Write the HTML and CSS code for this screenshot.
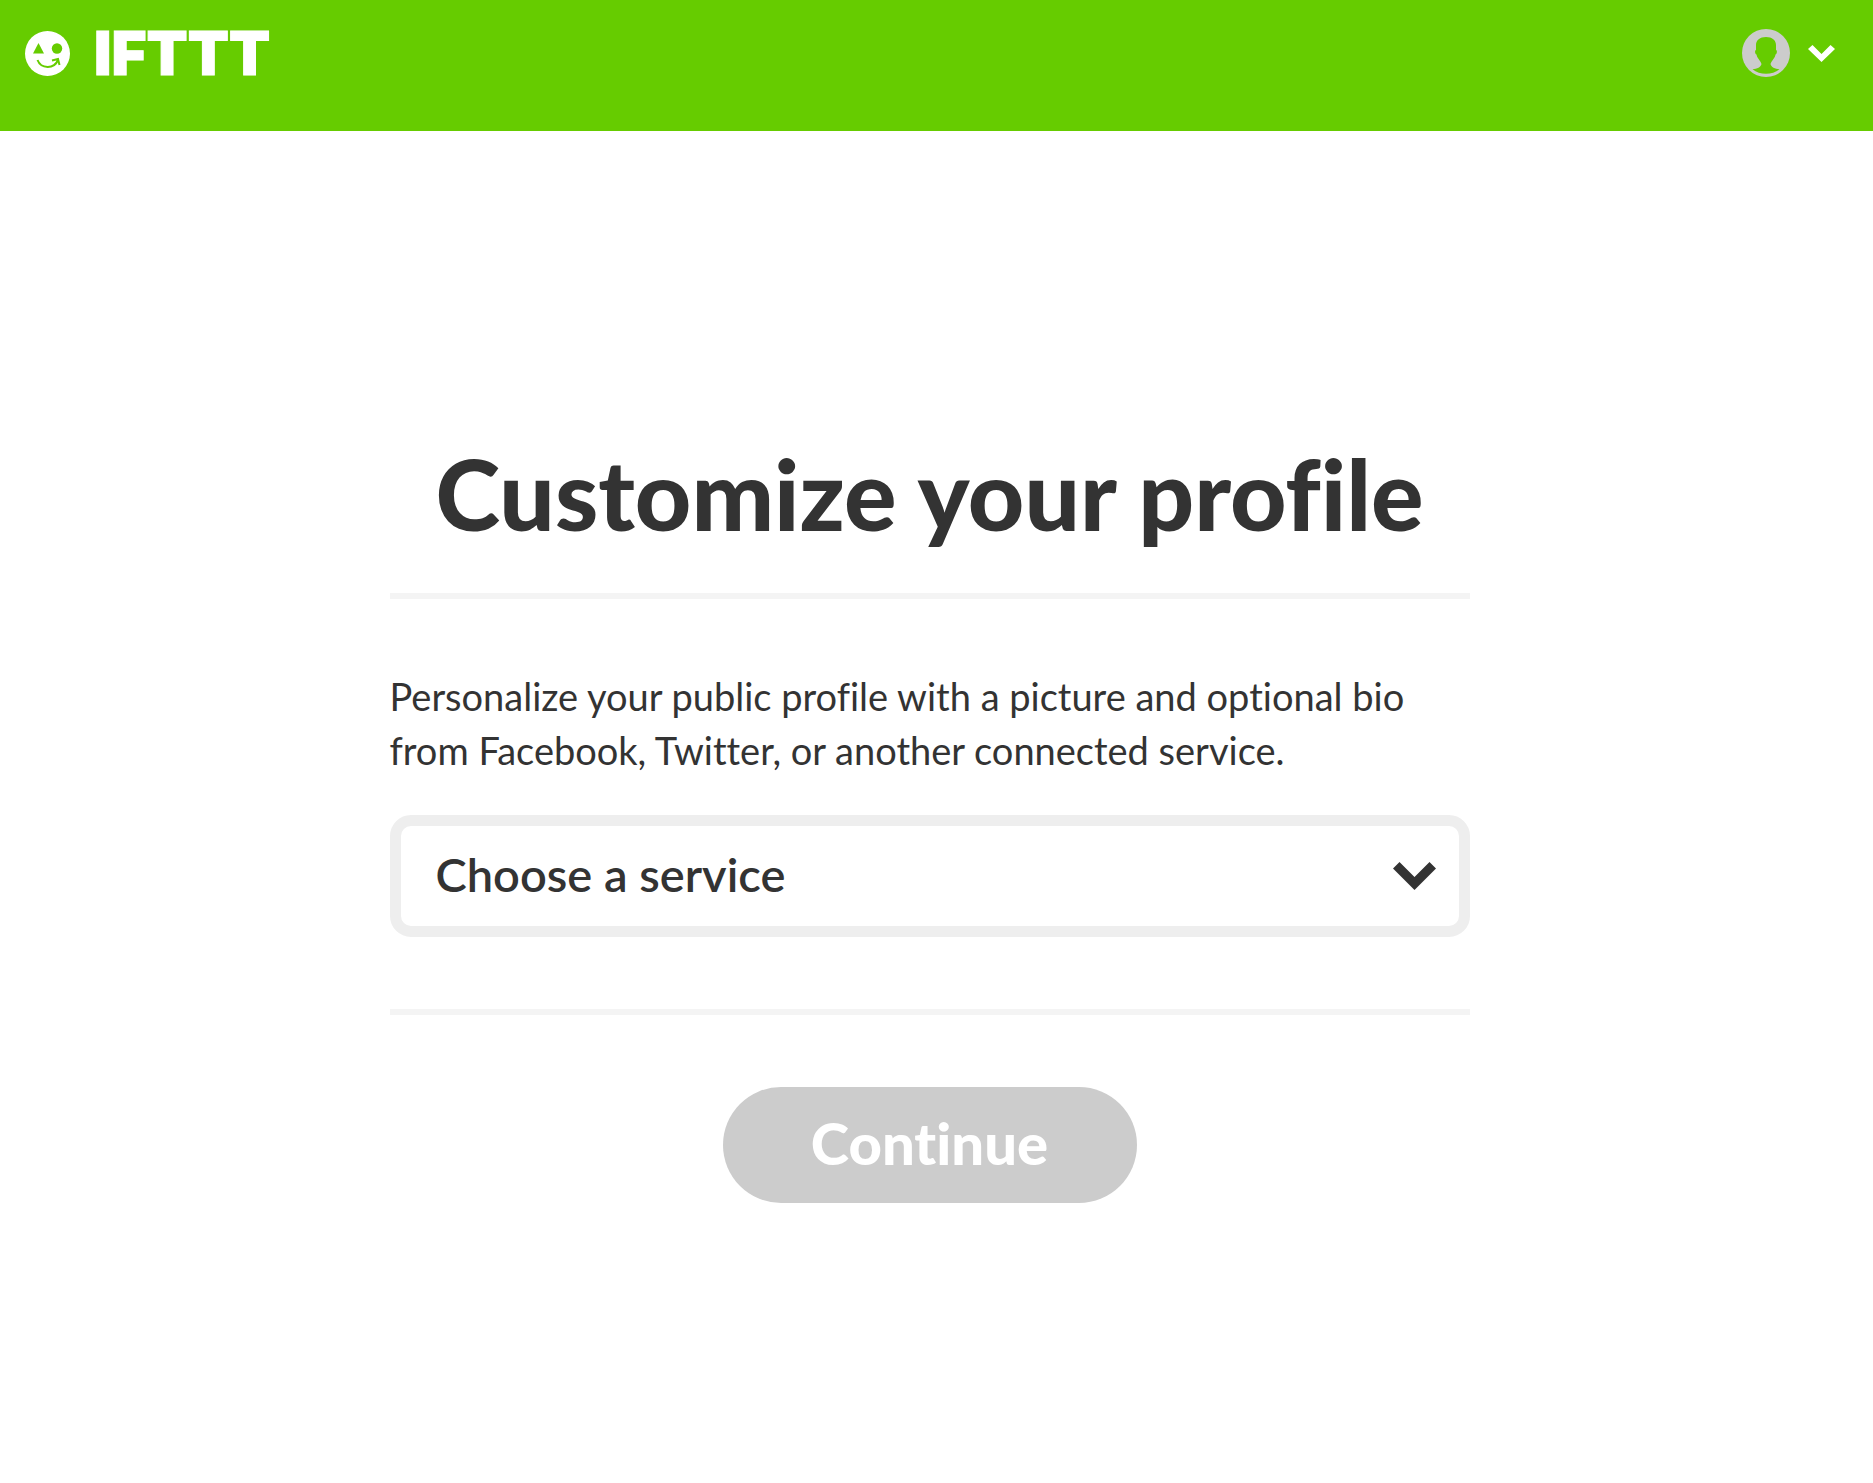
FILE: index.html
```
<!DOCTYPE html>
<html lang="en">
<head>
<meta charset="utf-8">
<meta name="viewport" content="width=device-width, initial-scale=1">
<title>Customize your profile - IFTTT</title>
<link rel="stylesheet" href="styles.css">
</head>
<body>
<header class="site-header">
  <a class="brand" href="/">
    <svg class="brand-mark" viewBox="0 0 45 45" aria-hidden="true">
      <circle cx="22.5" cy="22.5" r="22.5" fill="#fff"/>
      <path d="M13.5 12 19 22.5H8Z" fill="#6c0"/>
      <circle cx="32" cy="17.5" r="5.2" fill="#6c0"/>
      <path d="M12.5 29C16 38 29 38.500 33 29M27 29.500 33 28 34.500 34" fill="none" stroke="#6c0" stroke-width="2"/>
    </svg>
    <span class="brand-name">IFTTT</span>
  </a>
  <button class="account" type="button" aria-label="Account menu">
    <svg class="avatar" viewBox="0 0 48 48" aria-hidden="true">
      <circle cx="24" cy="24" r="24" fill="#ccc"/>
      <path d="M24 8C30 8 34 11 34 16V21C35.500 21.500 35 25 33.500 25.500C33 29 30 31 28.500 35C29 38 33 40 37.500 40.300C30 46.300 18 46.300 10.500 40.300C15 40 19 38 19.500 35C18 31 15 29 14.500 25.500C13 25 12.500 21.500 14 21V16C14 11 18 8 24 8Z" fill="#6c0"/>
    </svg>
    <svg class="account-arrow" viewBox="0 0 27 17" aria-hidden="true">
      <path d="M0 4 4.500 0 13.500 9 22.500 0 27 4 13.500 17Z" fill="#fff"/>
    </svg>
  </button>
</header>
<main class="page">
  <form class="profile">
    <h1 class="title">Customize your profile</h1>
    <div class="service">
      <label class="intro" for="service">Personalize your public profile with a picture and optional bio from Facebook, Twitter, or another connected service.</label>
      <div class="picker">
        <select class="picker-select" id="service">
          <option>Choose a service</option>
          <option>Facebook</option>
          <option>Twitter</option>
        </select>
        <svg class="picker-arrow" viewBox="0 0 43 28" aria-hidden="true">
          <path d="M0 6.500 6.500 0 21.500 15 36.500 0 43 6.500 21.500 28Z" fill="#333"/>
        </svg>
      </div>
    </div>
    <button class="continue" type="submit" disabled>Continue</button>
  </form>
</main>
</body>
</html>
```
FILE: styles.css
```
* { box-sizing: border-box; }
body {
  margin: 0;
  background: #fff;
  color: #333;
  font-family: Lato, "Open Sans", sans-serif;
  font-variant-ligatures: none;
}
.site-header {
  display: flex;
  justify-content: space-between;
  align-items: flex-start;
  padding: 29px 38px 54px 25px;
  background: #6c0;
}
.brand {
  display: flex;
  align-items: center;
  gap: 24px;
  height: 48px;
  color: #fff;
  text-decoration: none;
}
.brand-mark { width: 45px; height: 45px; }
.brand-name {
  font-family: Inter, sans-serif;
  font-size: 60px;
  font-weight: 900;
  line-height: 48px;
  -webkit-text-stroke: 1px #fff;
}
.account {
  display: flex;
  align-items: center;
  gap: 18px;
  padding: 0;
  border: 0;
  background: none;
}
.avatar { width: 48px; height: 48px; }
.account-arrow { width: 27px; height: 17px; }
.page { padding: 312px 54px 80px 40px; }
.profile {
  display: flex;
  flex-direction: column;
  align-items: center;
  max-width: 1080px;
  margin: 0 auto;
}
.title {
  width: 100%;
  margin: 0;
  padding-bottom: 50px;
  font-size: 98px;
  font-weight: 900;
  line-height: 100px;
  text-align: center;
}
.service {
  width: 100%;
  padding: 70px 0 72px;
  border: solid #f4f4f4;
  border-width: 6px 0;
}
.intro {
  display: block;
  margin-bottom: 38px;
  font-size: 38px;
  line-height: 54px;
}
.picker { display: grid; align-items: center; }
.picker-select {
  grid-area: 1 / 1;
  width: 100%;
  height: 122px;
  padding: 0 80px 4px 35px;
  appearance: none;
  border: 11px solid #eee;
  border-radius: 21px;
  background: #fff;
  color: #333;
  font: 600 47px Lato, "Open Sans", sans-serif;
}
.picker-arrow {
  grid-area: 1 / 1;
  justify-self: end;
  width: 43px;
  height: 28px;
  margin-right: 34px;
  pointer-events: none;
}
.continue {
  width: 414px;
  max-width: 100%;
  height: 116px;
  margin-top: 72px;
  padding: 0 0 6px;
  border: 0;
  border-radius: 58px;
  background: #ccc;
  color: #fff;
  font: 900 58px Lato, "Open Sans", sans-serif;
  font-variant-ligatures: none;
}
```
